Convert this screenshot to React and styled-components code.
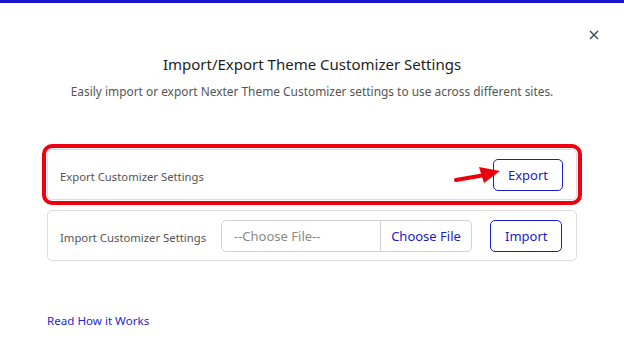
import React from "react";
import styled, { createGlobalStyle } from "styled-components";

const GlobalStyle = createGlobalStyle`
	html, body {
		margin: 0;
		padding: 0;
		background: #fff;
	}
	body {
		font-family: "Noto Sans", "Open Sans", sans-serif;
	}
`;

const Modal = styled.div`
	position: relative;
	width: 624px;
	height: 349px;
	box-sizing: border-box;
	border-top: 3px solid #1616cf;
	background: #fff;
	padding: 0 47px;
	display: flex;
	flex-direction: column;
`;

const Close = styled.button`
	position: absolute;
	top: 23px;
	right: 21px;
	width: 18px;
	height: 18px;
	padding: 0;
	border: none;
	background: none;
	display: flex;
	align-items: center;
	justify-content: center;
	cursor: pointer;
`;

const Header = styled.div`
	display: flex;
	flex-direction: column;
	align-items: center;
	padding-top: 50px;
`;

const Title = styled.h2`
	margin: 0;
	font-size: 15px;
	font-weight: 400;
	color: #1e1e1e;
	line-height: 22px;
`;

const Subtitle = styled.p`
	margin: 7px 0 0;
	font-size: 11.9px;
	color: #555;
	line-height: 18px;
`;

const Cards = styled.div`
	display: flex;
	flex-direction: column;
	gap: 10px;
	margin-top: 49px;
`;

const Card = styled.div`
	position: relative;
	height: 51px;
	box-sizing: border-box;
	border: 1px solid #dcdcdc;
	border-radius: 5px;
	display: flex;
	align-items: center;
	padding: 1px 13px 0 12px;
	outline: ${props => (props.highlight ? "4px solid #ee0010" : "none")};
	outline-offset: 1px;
`;

const Label = styled.span`
	font-size: 11.3px;
	color: #555;
	padding-top: 3px;
	flex: ${props => (props.grow ? 1 : "none")};
	width: ${props => (props.grow ? "auto" : "161px")};
`;

const Button = styled.button`
	height: 32px;
	padding: 0 14px;
	margin-left: ${props => props.gap || 0}px;
	border: 1px solid #1c1cc6;
	border-radius: 5px;
	background: #fff;
	color: #1c1cc6;
	font-family: inherit;
	font-size: 13px;
	cursor: pointer;
`;

const FileInput = styled.div`
	display: flex;
	width: 251px;
	height: 32px;
	box-sizing: border-box;
	border: 1px solid #d2d2d2;
	border-radius: 5px;
	overflow: hidden;
`;

const FileName = styled.span`
	flex: 1;
	display: flex;
	align-items: center;
	padding-left: 12px;
	font-size: 13px;
	color: #8a8a8a;
	border-right: 1px solid #d2d2d2;
`;

const FileButton = styled.span`
	width: 90px;
	display: flex;
	align-items: center;
	justify-content: center;
	font-size: 13px;
	color: #1c1cc6;
`;

const Arrow = styled.svg`
	position: absolute;
	left: 406px;
	top: 14px;
`;

const Link = styled.a`
	margin-top: 52px;
	font-size: 11.6px;
	color: #2a1fd0;
	text-decoration: none;
`;

const App = () => (
	<>
		<GlobalStyle />
		<Modal>
			<Close aria-label="Close">
				<svg width="10" height="10" viewBox="0 0 10 10">
					<path d="M1 1 L9 9 M9 1 L1 9" stroke="#3e4653" strokeWidth="1.4" />
				</svg>
			</Close>
			<Header>
				<Title>Import/Export Theme Customizer Settings</Title>
				<Subtitle>Easily import or export Nexter Theme Customizer settings to use across different sites.</Subtitle>
			</Header>
			<Cards>
				<Card highlight>
					<Label grow>Export Customizer Settings</Label>
					<Button>Export</Button>
					<Arrow width="50" height="20" viewBox="0 0 50 20">
						<path d="M2 16 L28 11.5" stroke="#e8000c" strokeWidth="4" strokeLinecap="round" />
						<path d="M25 3 L46 7 L30 19 Z" fill="#e8000c" />
					</Arrow>
				</Card>
				<Card>
					<Label>Import Customizer Settings</Label>
					<FileInput>
						<FileName>--Choose File--</FileName>
						<FileButton>Choose File</FileButton>
					</FileInput>
					<Button gap={18}>Import</Button>
				</Card>
			</Cards>
			<Link href="#">Read How it Works</Link>
		</Modal>
	</>
);

export default App;
